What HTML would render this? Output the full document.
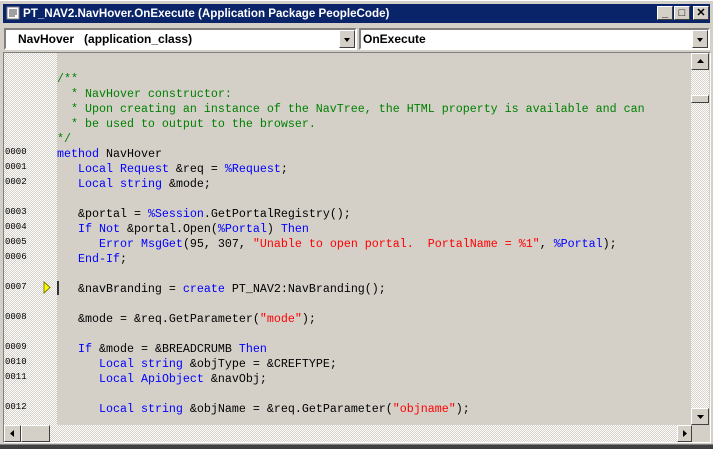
<!DOCTYPE html>
<html><head><style>
*{margin:0;padding:0;box-sizing:border-box}
body{width:713px;height:449px;background:#d4d0c8;position:relative;overflow:hidden;font-family:"Liberation Sans",sans-serif}
.title{position:absolute;left:0;top:0;width:713px;height:25px;background:#d4d0c8;border-top:1px solid #fff}
.tb{position:absolute;left:3px;top:3px;width:707px;height:19px;background:#0a246a;color:#fff;font-weight:bold;font-size:11.6px;line-height:19px;padding-left:20px}
.btn{position:absolute;top:5px;width:16px;height:14px;background:#d4d0c8;border:1px solid;border-color:#fff #404040 #404040 #fff;font-size:11px;font-weight:bold;color:#000;text-align:center;line-height:12px}
.combo{position:absolute;top:28px;height:22px;background:#fff;border:2px solid;border-color:#808080 #fff #fff #808080;font-weight:bold;font-size:12px;line-height:18px}
.dd{position:absolute;right:0;top:0;width:16px;height:18px;background:#d4d0c8;border:1px solid;border-color:#fff #404040 #404040 #fff}
.dd:after{content:"";position:absolute;left:4px;top:7px;border:3px solid transparent;border-top:4px solid #000;border-bottom:0}
.edit{position:absolute;left:3px;top:52px;width:708px;height:391px;border:1px solid;border-color:#808080 #fff #fff #808080}
.gut{position:absolute;left:4px;top:53px;width:53px;height:372px;background:repeating-conic-gradient(#fff 0 25%,#d4d0c8 0 50%) 0 0/2px 2px}
.code{position:absolute;left:57px;top:53px;width:634px;height:372px;background:#d4d0c8}
.l{position:absolute;left:57px;font-family:"Liberation Mono",monospace;font-size:11.67px;white-space:pre;line-height:14px;color:#000;margin-top:2px}
.n{position:absolute;left:5px;font-family:"Liberation Mono",monospace;font-size:9px;line-height:10px;color:#000;margin-top:1px}
.g{color:#008000}.b{color:#0000ff}.r{color:#ff0000}
.vs{position:absolute;left:691px;top:53px;width:18px;height:372px;background:repeating-conic-gradient(#fff 0 25%,#d4d0c8 0 50%) 0 0/2px 2px}
.hs{position:absolute;left:4px;top:425px;width:687px;height:17px;background:repeating-conic-gradient(#fff 0 25%,#d4d0c8 0 50%) 0 0/2px 2px}
.sb{position:absolute;background:#d4d0c8;border:1px solid;border-color:#fff #404040 #404040 #fff}
</style></head><body>
<div class="title"><div class="tb">PT_NAV2.NavHover.OnExecute (Application Package PeopleCode)</div>
<svg style="position:absolute;left:6px;top:5px" width="16" height="16"><rect x="1" y="1" width="12" height="12" fill="#fff" stroke="#808080"/><path d="M3 4h8M3 6h8M3 8h8M3 10h6" stroke="#404040"/></svg>
<div class="btn" style="left:657px">_</div><div class="btn" style="left:674px">□</div><div class="btn" style="left:693px">✕</div>
</div>
<div class="combo" style="left:4px;width:353px;padding-left:12px">NavHover&nbsp;&nbsp;&nbsp;(application_class)<div class="dd"></div></div>
<div class="combo" style="left:359px;width:351px;padding-left:2px">OnExecute<div class="dd"></div></div>
<div class="edit"></div>
<div class="gut"></div><div class="code"></div>
<div class="l g" style="top:70px">/**</div>
<div class="l g" style="top:85px">  * NavHover constructor:</div>
<div class="l g" style="top:100px">  * Upon creating an instance of the NavTree, the HTML property is available and can</div>
<div class="l g" style="top:115px">  * be used to output to the browser.</div>
<div class="l g" style="top:130px">*/</div>
<div class="l" style="top:145px"><span class="b">method</span> NavHover</div>
<div class="l" style="top:160px">   <span class="b">Local Request</span> &amp;req = <span class="b">%Request</span>;</div>
<div class="l" style="top:175px">   <span class="b">Local string</span> &amp;mode;</div>
<div class="l" style="top:205px">   &amp;portal = <span class="b">%Session</span>.GetPortalRegistry();</div>
<div class="l" style="top:220px">   <span class="b">If Not</span> &amp;portal.Open(<span class="b">%Portal</span>) <span class="b">Then</span></div>
<div class="l" style="top:235px">      <span class="b">Error MsgGet</span>(95, 307, <span class="r">"Unable to open portal.  PortalName = %1"</span>, <span class="b">%Portal</span>);</div>
<div class="l" style="top:250px">   <span class="b">End-If</span>;</div>
<div class="l" style="top:280px">   &amp;navBranding = <span class="b">create</span> PT_NAV2:NavBranding();</div>
<div class="l" style="top:310px">   &amp;mode = &amp;req.GetParameter(<span class="r">"mode"</span>);</div>
<div class="l" style="top:340px">   <span class="b">If</span> &amp;mode = &amp;BREADCRUMB <span class="b">Then</span></div>
<div class="l" style="top:355px">      <span class="b">Local string</span> &amp;objType = &amp;CREFTYPE;</div>
<div class="l" style="top:370px">      <span class="b">Local ApiObject</span> &amp;navObj;</div>
<div class="l" style="top:400px">      <span class="b">Local string</span> &amp;objName = &amp;req.GetParameter(<span class="r">"objname"</span>);</div>
<div class="n" style="top:146px">0000</div><div class="n" style="top:161px">0001</div><div class="n" style="top:176px">0002</div>
<div class="n" style="top:206px">0003</div><div class="n" style="top:221px">0004</div><div class="n" style="top:236px">0005</div><div class="n" style="top:251px">0006</div>
<div class="n" style="top:281px">0007</div><div class="n" style="top:311px">0008</div><div class="n" style="top:341px">0009</div>
<div class="n" style="top:356px">0010</div><div class="n" style="top:371px">0011</div><div class="n" style="top:401px">0012</div>
<svg style="position:absolute;left:43px;top:281px" width="16" height="14"><path d="M1 1v11l6-5.5z" fill="#ffff00" stroke="#808000"/><rect x="14" y="0" width="2" height="14" fill="#333"/></svg>
<div class="vs"></div><div class="hs"></div>
<div class="sb" style="left:691px;top:53px;width:18px;height:17px"></div>
<svg style="position:absolute;left:697px;top:59px" width="7" height="4"><path d="M3.5 0L7 4H0z"/></svg>
<div class="sb" style="left:691px;top:95px;width:18px;height:8px"></div>
<div class="sb" style="left:691px;top:408px;width:18px;height:17px"></div>
<svg style="position:absolute;left:697px;top:415px" width="7" height="4"><path d="M0 0H7L3.5 4z"/></svg>
<div class="sb" style="left:4px;top:425px;width:17px;height:17px"></div>
<svg style="position:absolute;left:10px;top:430px" width="4" height="7"><path d="M4 0V7L0 3.5z"/></svg>
<div class="sb" style="left:21px;top:425px;width:29px;height:17px"></div>
<div class="sb" style="left:677px;top:425px;width:15px;height:17px"></div>
<svg style="position:absolute;left:683px;top:430px" width="4" height="7"><path d="M0 0V7L4 3.5z"/></svg>
<div style="position:absolute;left:0;top:444px;width:713px;height:1px;background:#808080"></div>
<div style="position:absolute;left:0;top:445px;width:713px;height:4px;background:#404040"></div>
</body></html>
